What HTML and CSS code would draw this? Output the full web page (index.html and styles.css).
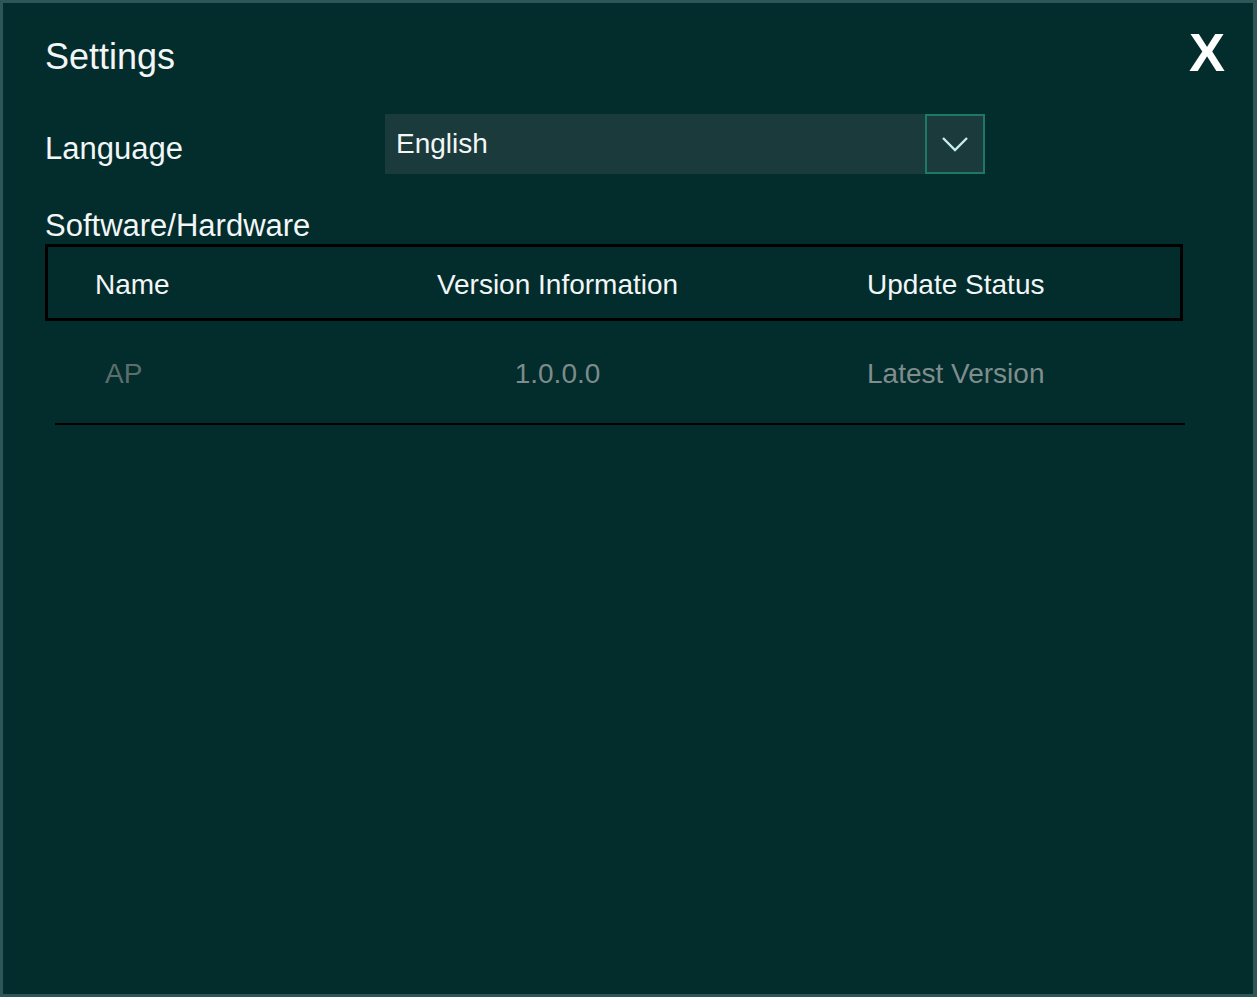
FILE: index.html
```html
<!DOCTYPE html>
<html lang="en">
<head>
    <meta charset="UTF-8">
    <meta name="viewport" content="width=device-width, initial-scale=1.0">
    <title>Settings</title>
    <link rel="stylesheet" href="styles.css">
</head>
<body>

<div class="dialog">
    <div class="dialog-head">
        <h1>Settings</h1>
        <button class="close-btn">X</button>
    </div>

    <div class="setting-row">
        <label class="setting-label">Language</label>
        <div class="select-box">
            <span class="select-value">English</span>
            <span class="select-arrow">
                <svg width="28" height="16" viewBox="0 0 28 16">
                    <polyline points="2,2 14,14 26,2" fill="none" stroke="#c6eeee" stroke-width="2.4"/>
                </svg>
            </span>
        </div>
    </div>

    <h2 class="section-title">Software/Hardware</h2>

    <div class="table-head">
        <span class="col-name">Name</span>
        <span class="col-version">Version Information</span>
        <span class="col-status">Update Status</span>
    </div>

    <div class="table-row">
        <span class="col-name cell-name">AP</span>
        <span class="col-version cell-version">1.0.0.0</span>
        <span class="col-status cell-status">Latest Version</span>
    </div>
</div>

</body>
</html>
```

FILE: styles.css
```css
* {
    box-sizing: border-box;
    margin: 0;
    padding: 0;
    font-family: "Liberation Sans", Arial, sans-serif;
}

html, body {
    height: 100%;
}

body {
    background: #2e5558;
    padding: 3px 4px 3px 3px;
    color: #f2f6f6;
}

.dialog {
    height: 100%;
    background: #032c2c;
    padding: 0 0 0 42px;
}

.dialog-head {
    display: flex;
    justify-content: space-between;
    align-items: flex-start;
    height: 111px;
}

h1 {
    font-size: 36px;
    font-weight: normal;
    line-height: 40px;
    margin-top: 34px;
}

.close-btn {
    background: none;
    border: none;
    color: #fff;
    font-size: 54px;
    font-weight: bold;
    line-height: 54px;
    margin-top: 22px;
    margin-right: 28px;
    cursor: pointer;
}

.setting-row {
    display: flex;
    align-items: center;
    height: 60px;
}

.setting-label {
    width: 340px;
    font-size: 31px;
    padding-top: 10px;
}

.select-box {
    display: flex;
    width: 600px;
    height: 60px;
    background: #1a3a3b;
}

.select-value {
    flex: 1;
    font-size: 28px;
    line-height: 60px;
    padding-left: 11px;
}

.select-arrow {
    width: 60px;
    height: 60px;
    border: 2px solid #1d7868;
    display: flex;
    align-items: center;
    justify-content: center;
}

.section-title {
    font-size: 31px;
    font-weight: normal;
    line-height: 36px;
    margin-top: 34px;
}

.table-head {
    display: grid;
    grid-template-columns: 252px 515px 1fr;
    align-items: center;
    width: 1138px;
    height: 77px;
    border: 3px solid #000;
    font-size: 28px;
    padding-top: 5px;
}

.table-row {
    display: grid;
    grid-template-columns: 245px 515px 1fr;
    align-items: center;
    width: 1130px;
    height: 104px;
    margin-left: 10px;
    border-bottom: 2px solid #000;
    font-size: 28px;
    padding-top: 4px;
}

.col-name {
    padding-left: 47px;
}

.cell-name {
    padding-left: 50px;
    color: #5b6d6d;
}

.col-version {
    text-align: center;
}

.cell-version {
    color: #7d8b8b;
}

.col-status {
    padding-left: 52px;
}

.cell-status {
    color: #7f8d8d;
}
```
